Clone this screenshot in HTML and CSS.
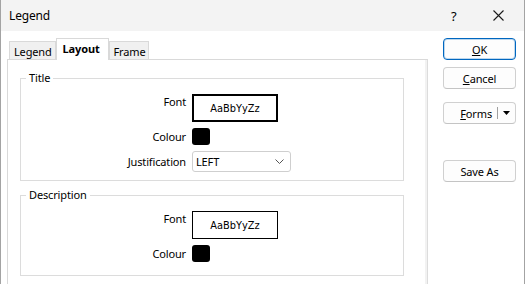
FILE: index.html
```html
<!DOCTYPE html>
<html lang="en">
<head>
	<meta charset="UTF-8">
	<title>Legend</title>
	<link rel="stylesheet" href="styles.css">
</head>
<body>
	<div class="window">
		<div class="titlebar">
			<span class="title">Legend</span>
			<span class="help">?</span>
			<span class="close">
				<svg width="11" height="11" viewBox="0 0 11 11"><path d="M0.5 0.5 L10.5 10.5 M10.5 0.5 L0.5 10.5" stroke="#1a1a1a" stroke-width="1.1" fill="none"/></svg>
			</span>
		</div>
		<div class="content">
			<div class="tabs-area">
				<div class="tabs">
					<div class="tab">Legend</div>
					<div class="tab tab-active">Layout</div>
					<div class="tab">Frame</div>
				</div>
				<div class="panel">
					<fieldset class="group">
						<legend class="group-title">Title</legend>
						<div class="rows">
							<label class="row-label label-top">Font</label>
							<div class="font-box font-box-thick">AaBbYyZz</div>
							<label class="row-label">Colour</label>
							<div class="swatch"></div>
							<label class="row-label">Justification</label>
							<div class="select">
								<span>LEFT</span>
								<svg width="9" height="5" viewBox="0 0 9 5"><path d="M0.5 0.5 L4.5 4.5 L8.5 0.5" stroke="#555" stroke-width="1" fill="none"/></svg>
							</div>
						</div>
					</fieldset>
					<fieldset class="group group-desc">
						<legend class="group-title">Description</legend>
						<div class="rows">
							<label class="row-label label-top">Font</label>
							<div class="font-box">AaBbYyZz</div>
							<label class="row-label">Colour</label>
							<div class="swatch"></div>
						</div>
					</fieldset>
				</div>
			</div>
			<div class="buttons">
				<button class="btn btn-default"><u>O</u>K</button>
				<button class="btn btn-cancel"><u>C</u>ancel</button>
				<div class="btn btn-split">
					<span class="split-text"><u>F</u>orms</span>
					<span class="split-line"></span>
					<svg width="7" height="4" viewBox="0 0 7 4"><path d="M0 0 L7 0 L3.5 4 Z" fill="#000"/></svg>
				</div>
				<button class="btn btn-save">Save As</button>
			</div>
		</div>
	</div>
</body>
</html>
```

FILE: styles.css
```css
body {
	margin: 0;
	padding: 0;
	background-color: #fff;
	color: #000;
	font-family: "Noto Sans", Arial, sans-serif;
	font-size: 11px;
	letter-spacing: -0.15px;
}

.window {
	height: 284px;
	box-sizing: border-box;
	border-left: 1px solid #a3a3a3;
	border-right: 1px solid #a3a3a3;
	overflow: hidden;
}

.titlebar {
	height: 31px;
	background-color: #f3f3f3;
	display: flex;
	align-items: center;
	padding-left: 8px;
}
.title {
	font-size: 12px;
	flex: 1;
}
.help {
	font-size: 13px;
	width: 12px;
	margin-right: 30px;
}
.close {
	display: flex;
	margin-right: 20px;
}

.content {
	display: flex;
	padding-top: 7px;
}

.tabs-area {
	margin-left: 6px;
	width: 421px;
}
.tabs {
	display: flex;
	align-items: flex-end;
	height: 21px;
	padding-left: 2px;
}
.tab {
	height: 18px;
	line-height: 19px;
	box-sizing: border-box;
	padding: 0 3px 0 4px;
	border: 1px solid #d9d9d9;
	border-bottom: none;
	background-color: #f0f0f0;
}
.tab-active {
	height: 22px;
	line-height: 20px;
	margin-bottom: -1px;
	padding: 0 8px 0 6px;
	background-color: #fff;
	font-weight: bold;
	position: relative;
	z-index: 1;
}

.panel {
	height: 240px;
	border: 1px solid #d9d9d9;
	border-right: 1px solid #dcdcdc;
	box-shadow: inset -2px 0 0 #f2f2f2;
	padding: 10px 0 0 12px;
}

.group {
	width: 384px;
	box-sizing: border-box;
	margin: 0;
	padding: 0 0 8px 0;
	border: 1px solid #dcdcdc;
}
.group-desc {
	margin-top: 6px;
	padding-bottom: 13px;
}
.group-title {
	margin-left: 5px;
	padding: 0 3px;
	height: 16px;
	line-height: 16px;
}

.rows {
	margin-top: 8px;
	display: grid;
	grid-template-columns: 165px auto;
	column-gap: 6px;
	row-gap: 6px;
	justify-items: start;
	align-items: center;
}
.row-label {
	justify-self: end;
	line-height: 16px;
}
.label-top {
	align-self: start;
}

.font-box {
	width: 86px;
	height: 28px;
	box-sizing: border-box;
	border: 1px solid #000;
	display: flex;
	align-items: center;
	justify-content: center;
	font-family: "DejaVu Sans", sans-serif;
	font-size: 9.8px;
	letter-spacing: 0;
}
.font-box-thick {
	border-width: 2px;
}

.swatch {
	width: 18px;
	height: 17px;
	background-color: #000;
	border-radius: 3px;
}

.select {
	width: 99px;
	height: 21px;
	box-sizing: border-box;
	border: 1px solid #cfcfcf;
	border-radius: 3px;
	display: flex;
	align-items: center;
	justify-content: space-between;
	padding: 0 6px 0 3px;
}

.buttons {
	margin-left: 15px;
	width: 73px;
	display: flex;
	flex-direction: column;
}
.btn {
	height: 22px;
	box-sizing: border-box;
	background-color: #fdfdfd;
	border: 1px solid #d0d0d0;
	border-bottom-color: #c4c4c4;
	border-radius: 4px;
	font-family: "Noto Sans", Arial, sans-serif;
	font-size: 11px;
	letter-spacing: -0.15px;
	color: #000;
	padding: 0;
}
.btn-default {
	border: 1px solid #0067c0;
	box-shadow: inset 0 0 0 1px rgba(0, 103, 192, 0.25);
}
.btn-cancel {
	margin-top: 7px;
}
.btn-split {
	margin-top: 13px;
	display: flex;
	align-items: center;
}
.split-text {
	flex: 1;
	text-align: right;
	padding-right: 5px;
}
.split-line {
	width: 1px;
	height: 12px;
	background-color: #a0a0a0;
	margin-right: 5px;
}
.btn-split svg {
	margin-right: 5px;
}
.btn-save {
	margin-top: 36px;
}
```
